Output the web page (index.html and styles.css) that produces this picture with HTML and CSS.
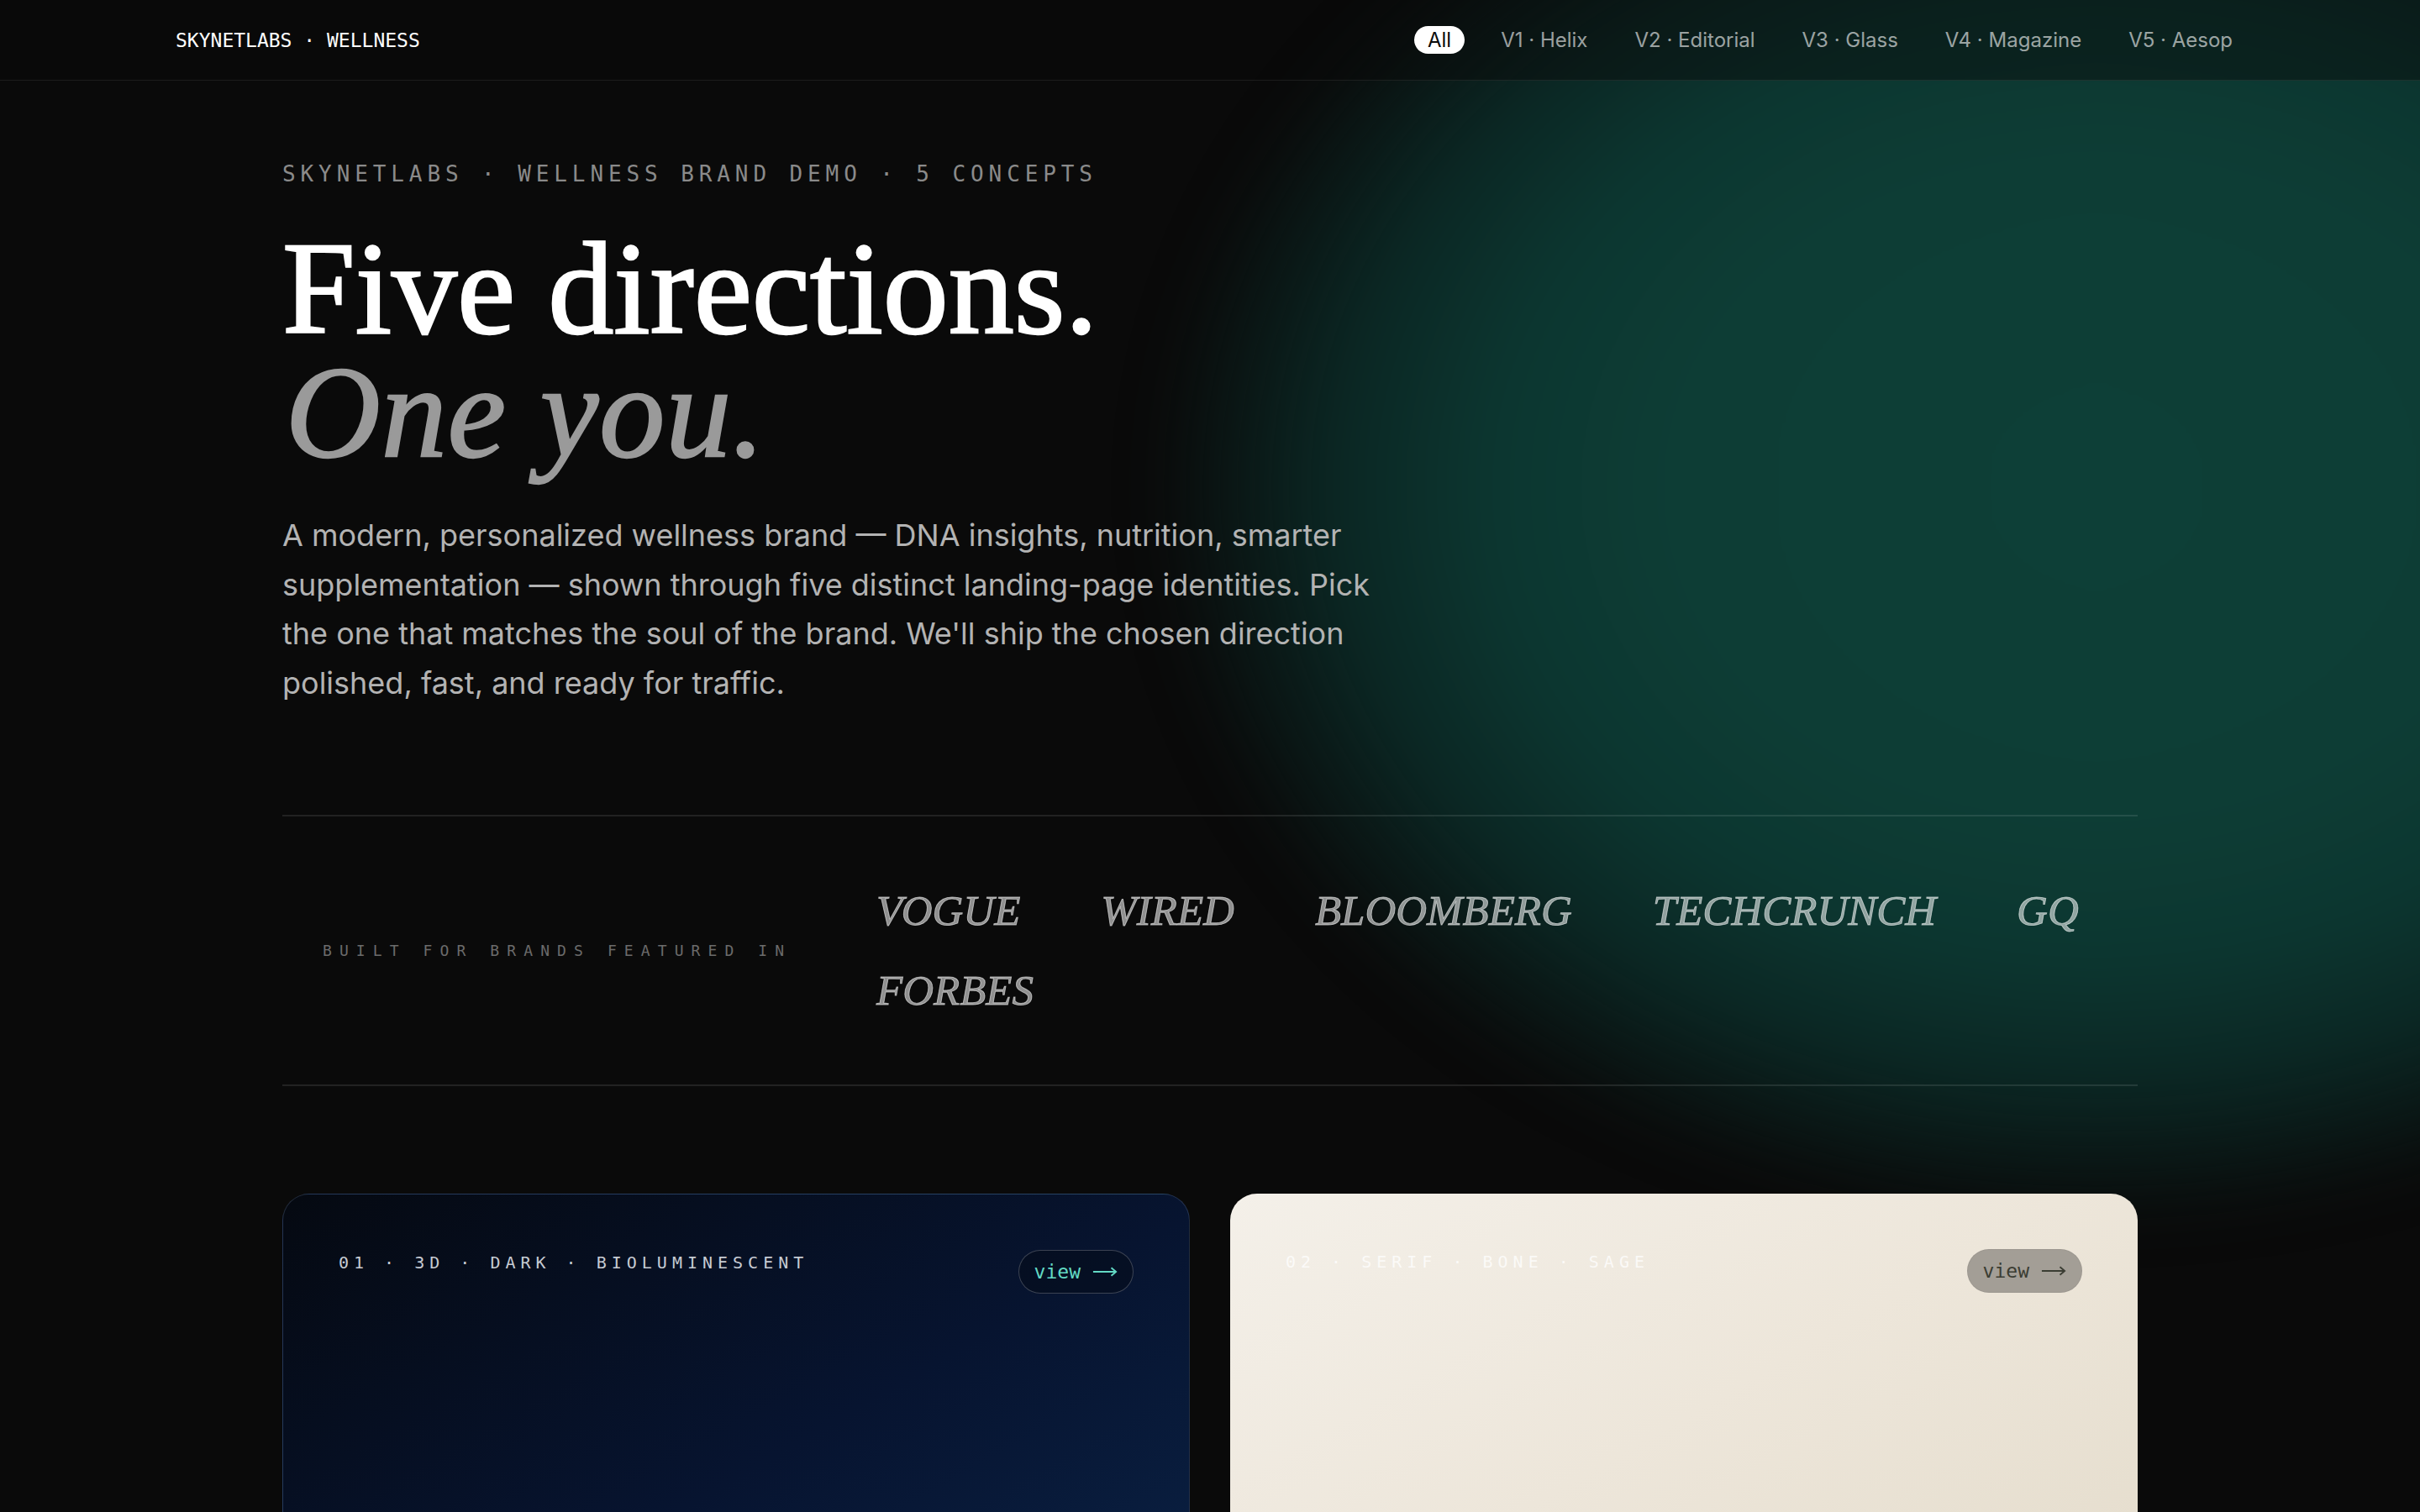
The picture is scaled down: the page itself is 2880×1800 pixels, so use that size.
FILE: index.html
```html
<!DOCTYPE html>
<html lang="en">
<head>
<meta charset="utf-8">
<title>SkynetLabs · Wellness — Five directions</title>
<link rel="stylesheet" href="styles.css">
</head>
<body>
<div class="glow" aria-hidden="true"></div>
<header class="topbar">
  <div class="topbar-inner">
    <div class="logo">SKYNETLABS · WELLNESS</div>
    <nav class="nav">
      <a class="nav-link is-active">All</a>
      <a class="nav-link">V1 · Helix</a>
      <a class="nav-link">V2 · Editorial</a>
      <a class="nav-link">V3 · Glass</a>
      <a class="nav-link">V4 · Magazine</a>
      <a class="nav-link">V5 · Aesop</a>
    </nav>
  </div>
</header>
<main class="page">
  <section class="hero">
    <p class="eyebrow">SKYNETLABS · WELLNESS BRAND DEMO · 5 CONCEPTS</p>
    <h1 class="headline"><span class="headline-line">Five directions.</span><em class="headline-line headline-soft">One you.</em></h1>
    <p class="lede">A modern, personalized wellness brand — DNA insights, nutrition, smarter supplementation — shown through five distinct landing-page identities. Pick the one that matches the soul of the brand. We'll ship the chosen direction polished, fast, and ready for traffic.</p>
  </section>

  <section class="press">
    <div class="press-label">BUILT FOR BRANDS FEATURED IN</div>
    <ul class="press-list">
      <li>VOGUE</li>
      <li>WIRED</li>
      <li>BLOOMBERG</li>
      <li>TECHCRUNCH</li>
      <li>GQ</li>
      <li>FORBES</li>
    </ul>
  </section>

  <section class="cards">
    <article class="card card-dark">
      <div class="card-head">
        <span class="card-tag">01 · 3D · DARK · BIOLUMINESCENT</span>
        <a class="card-btn">view<svg class="arrow" viewBox="0 0 32 14" aria-hidden="true"><path d="M1 7H30M24 2l6 5-6 5" fill="none" stroke="currentColor" stroke-width="2"/></svg></a>
      </div>
    </article>
    <article class="card card-bone">
      <div class="card-head">
        <span class="card-tag">02 · SERIF · BONE · SAGE</span>
        <a class="card-btn">view<svg class="arrow" viewBox="0 0 32 14" aria-hidden="true"><path d="M1 7H30M24 2l6 5-6 5" fill="none" stroke="currentColor" stroke-width="2"/></svg></a>
      </div>
    </article>
  </section>
</main>
</body>
</html>
```

FILE: styles.css
```css
* { box-sizing: border-box; }

html, body {
  margin: 0;
  padding: 0;
}

body {
  position: relative;
  background: #0a0a0a;
  color: #ffffff;
  font-family: "Inter", "Noto Sans", sans-serif;
  overflow-x: hidden;
  min-height: 1800px;
}

.glow {
  position: absolute;
  left: 1370px;
  top: -300px;
  width: 2250px;
  height: 1760px;
  border-radius: 50%;
  background: radial-gradient(closest-side, #0d3f37 0%, #0d3d35 45%, #0c3630 64%, #0b2522 82%, rgba(10,10,10,0) 100%);
  filter: blur(30px);
  pointer-events: none;
  z-index: 0;
}

.topbar {
  position: relative;
  z-index: 2;
  height: 96px;
  background: rgba(8, 9, 9, 0.45);
  border-bottom: 1px solid rgba(255, 255, 255, 0.08);
}

.topbar-inner {
  height: 95px;
  padding: 0 210px 0 209px;
  display: flex;
  align-items: center;
  justify-content: space-between;
}

.logo {
  font-family: "DejaVu Sans Mono", "Liberation Mono", monospace;
  font-size: 23px;
  color: #ffffff;
}

.nav {
  display: flex;
  align-items: center;
  gap: 30px;
}

.nav-link {
  font-family: "Inter", "Noto Sans", sans-serif;
  font-size: 24px;
  line-height: 33px;
  color: rgba(255, 255, 255, 0.6);
  padding: 0 13px;
  border-radius: 999px;
  white-space: nowrap;
}

.nav-link.is-active {
  background: #ffffff;
  color: #0a0a0a;
  padding: 0 16px;
}

.page {
  position: relative;
  z-index: 1;
  width: 2208px;
  margin: 0 auto;
  padding-top: 96px;
}

.eyebrow {
  margin: 0 0 48px;
  font-family: "DejaVu Sans Mono", "Liberation Mono", monospace;
  font-size: 26px;
  line-height: 30px;
  letter-spacing: 5.9px;
  color: #8a8a8a;
}

.headline {
  margin: 0;
  font-family: "Liberation Serif", "DejaVu Serif", serif;
  font-weight: 400;
  font-size: 156px;
  line-height: 147px;
  color: #ffffff;
}

.headline-line {
  display: block;
  -webkit-text-stroke: 2.4px currentColor;
}

.headline-soft {
  font-style: italic;
  color: #9a9a9a;
  letter-spacing: 1px;
  padding-left: 4px;
}

.lede {
  margin: 44px 0 0;
  max-width: 1320px;
  font-family: "Inter", "Noto Sans", sans-serif;
  font-size: 36px;
  line-height: 58.5px;
  color: #b3b3b3;
}

.press {
  margin-top: 128px;
  padding: 77px 48px;
  border-top: 2px solid rgba(255, 255, 255, 0.1);
  border-bottom: 2px solid rgba(255, 255, 255, 0.1);
  display: flex;
  align-items: center;
}

.press-label {
  flex: 0 0 659px;
  font-family: "DejaVu Sans Mono", "Liberation Mono", monospace;
  font-size: 18px;
  letter-spacing: 9.1px;
  color: #6b6b6b;
}

.press-list {
  flex: 1;
  margin: 0;
  padding: 0;
  list-style: none;
  display: flex;
  flex-wrap: wrap;
  column-gap: 96px;
  row-gap: 25px;
}

.press-list li {
  font-family: "Liberation Serif", "DejaVu Serif", serif;
  font-style: italic;
  font-size: 51px;
  line-height: 70px;
  color: rgba(255, 255, 255, 0.55);
  -webkit-text-stroke: 0.9px rgba(255, 255, 255, 0.55);
}

.cards {
  margin-top: 128px;
  display: grid;
  grid-template-columns: 1fr 1fr;
  gap: 48px;
}

.card {
  height: 820px;
  border-radius: 32px;
  padding: 66px;
}

.card-dark {
  background: linear-gradient(150deg, #050911 0%, #071430 45%, #0a2144 80%, #0c2a46 100%);
  border: 1.5px solid rgba(140, 170, 210, 0.22);
}

.card-bone {
  background: linear-gradient(150deg, #f4f0e9 0%, #ede6da 40%, #e5ddcd 75%, #d9d5c0 100%);
}

.card-head {
  display: flex;
  justify-content: space-between;
  align-items: flex-start;
}

.card-tag {
  font-family: "DejaVu Sans Mono", "Liberation Mono", monospace;
  font-size: 20px;
  line-height: 30px;
  letter-spacing: 6px;
}

.card-dark .card-tag { color: #c6cbd3; }
.card-bone .card-tag { color: rgba(255, 255, 255, 0.75); }

.card-btn {
  display: inline-flex;
  align-items: center;
  gap: 14px;
  font-family: "DejaVu Sans Mono", "Liberation Mono", monospace;
  font-size: 23px;
  line-height: 26px;
  padding: 12px 18px;
  border-radius: 999px;
  white-space: nowrap;
}

.arrow {
  width: 30px;
  height: 14px;
  display: block;
}

.card-dark .card-btn {
  color: #62d9c4;
  background: rgba(4, 10, 22, 0.5);
  border: 1.5px solid rgba(255, 255, 255, 0.22);
}

.card-bone .card-btn {
  color: #3b3d33;
  background: #a39e96;
  border: 1.5px solid rgba(0, 0, 0, 0.04);
}
```
